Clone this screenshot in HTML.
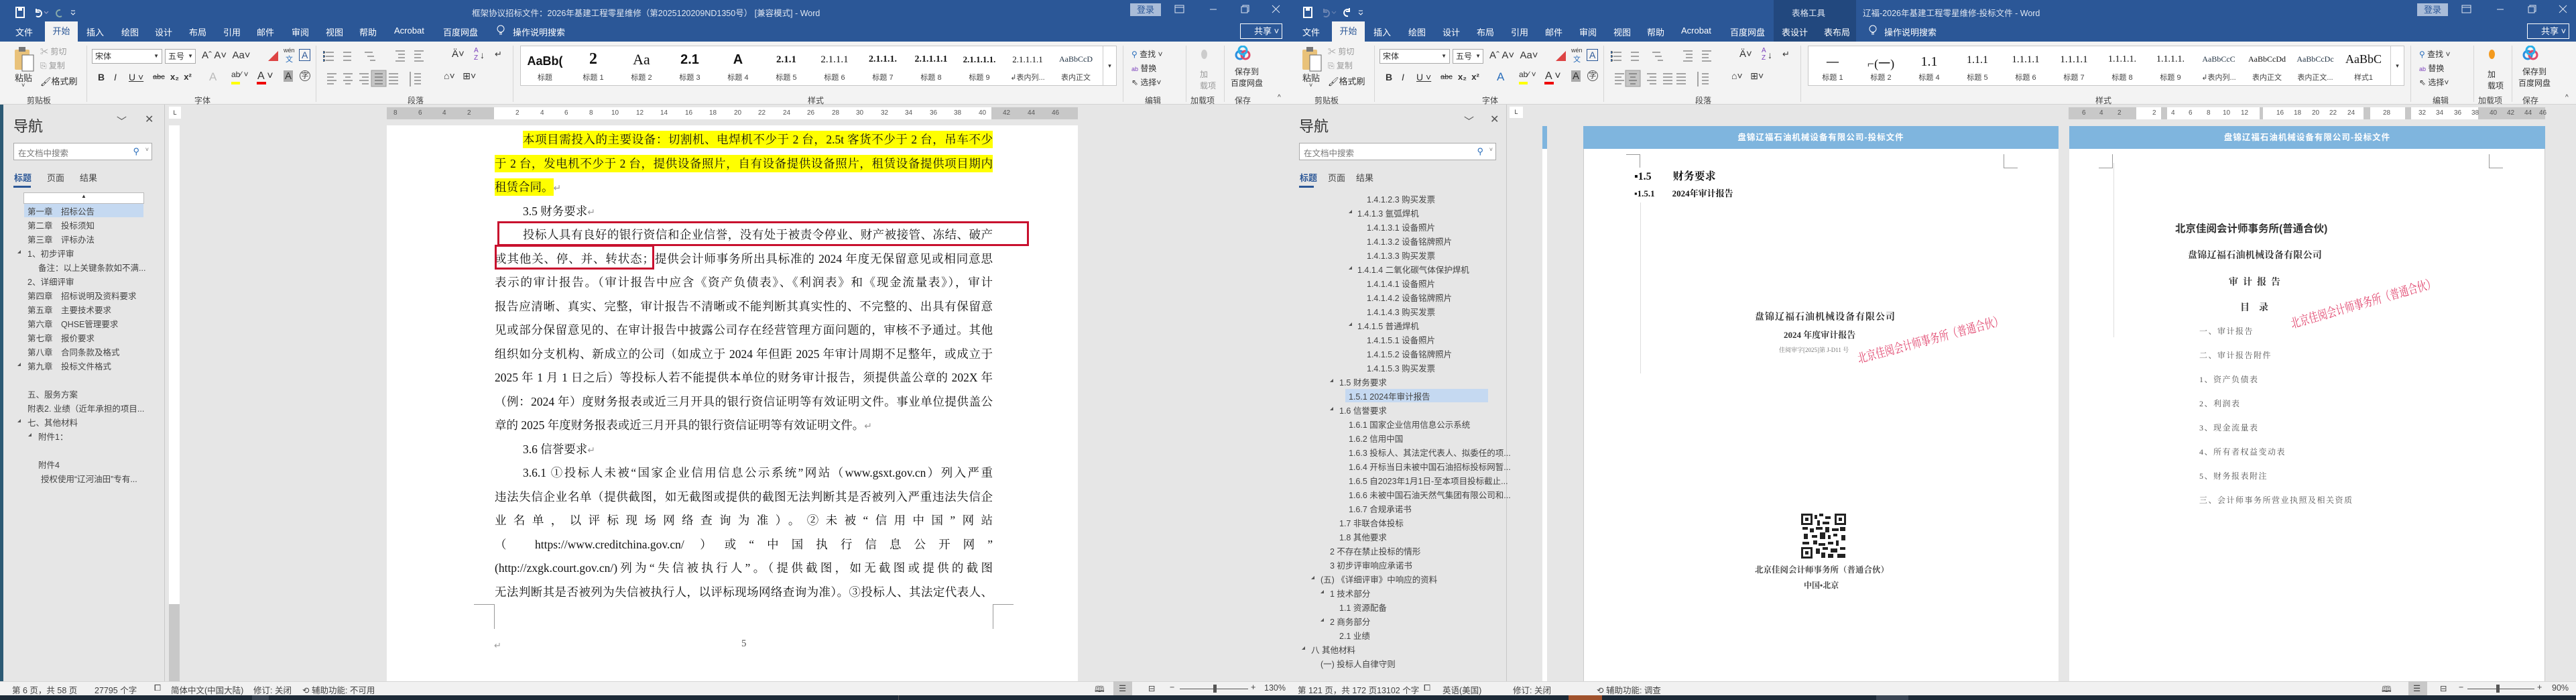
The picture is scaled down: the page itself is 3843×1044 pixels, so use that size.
<!DOCTYPE html>
<html><head><meta charset="utf-8">
<style>
*{margin:0;padding:0;box-sizing:border-box}
body{width:3843px;height:1044px;position:relative;overflow:hidden;background:#e6e6e6;font-family:"Liberation Sans","Noto Sans CJK SC",sans-serif;color:#333}
.a{position:absolute;white-space:nowrap}
.win{position:absolute;top:0;height:1044px;overflow:hidden;background:#e6e6e6}
.tb{position:absolute;left:0;right:0;top:0;height:62px;background:#2b5797}
.tab{position:absolute;top:38px;font-size:13px;color:#fff}
.seltab{position:absolute;top:32px;height:30px;width:49px;background:#f3f3f3;color:#2b5797;font-size:13px;text-align:center;line-height:30px}
.rib{position:absolute;left:0;right:0;top:62px;height:94px;background:#f3f3f3;border-bottom:1px solid #d4d4d4}
.r{position:absolute;font-size:12px;color:#333;white-space:nowrap}
.gl{position:absolute;top:79px;font-size:12px;color:#444}
.sep{position:absolute;top:6px;width:1px;height:84px;background:#d6d6d6}
.box{position:absolute;background:#fff;border:1px solid #aaa;font-size:12px;padding-left:4px;line-height:20px}
.gal{position:absolute;top:6px;height:60px;background:#fff;border:1px solid #c6c6c6}
.si{position:absolute;top:0;width:72px;text-align:center}
.sp{position:absolute;top:12px;left:0;width:72px;text-align:center;font-size:17px;font-weight:bold;color:#111;font-family:"Liberation Serif",serif;overflow:hidden}
.sl{position:absolute;top:38px;left:0;width:72px;text-align:center;font-size:11px;color:#444}
.nav{position:absolute;font-size:12.5px;color:#444;white-space:nowrap}
.tri{position:absolute;width:0;height:0;border-left:5px solid transparent;border-bottom:5px solid #555}
.status{position:absolute;left:0;right:0;top:1016px;height:21px;background:#f1f1f1;border-top:1px solid #d6d6d6;font-size:12.5px;color:#444}
.task{position:absolute;left:0;right:0;top:1037px;height:7px;background:#1d2a37}
.ln{position:absolute;left:738px;width:743px;height:35.5px;line-height:35.5px;font-size:17.5px;font-family:"Liberation Serif","Noto Serif CJK SC",serif;color:#111;text-align:justify;text-align-last:justify;white-space:nowrap}
.ln.l{text-align-last:left}
.ind{left:780px;width:701px}
.hl{background:#ffff00;padding:3px 0}
.rn{position:absolute;top:163px;font-size:10px;color:#555}
.ser{font-family:"Liberation Serif","Noto Serif CJK SC",serif}
.stamp{position:absolute;color:#e0406a;font-family:"Liberation Serif","Noto Serif CJK SC",serif;font-size:14px;white-space:nowrap;transform-origin:0 0}
</style></head><body>

<!-- ================= LEFT WINDOW ================= -->
<div class="win" style="left:0;width:1921px;">
  <div style="position:absolute;left:0;top:0;width:5px;height:1044px;background:#2c5a74"></div>
  <div class="tb"></div>
  <svg class="a" style="left:22px;top:10px" width="110" height="18"><rect x="2" y="1" width="12" height="15" fill="none" stroke="#fff" stroke-width="2"/><rect x="5" y="1" width="6" height="5" fill="#fff"/><path d="M32 6 a5 5 0 1 1 0 8 M32 3 v5 h5" stroke="#fff" fill="none" stroke-width="2"/><path d="M44 7 l3 3 l3-3" stroke="#aac" fill="none"/><path d="M68 5 a5 5 0 1 0 2 9" stroke="#8aa" fill="none" stroke-width="2"/><path d="M84 6 h6 M84 9 l3 3 l3-3" stroke="#fff" fill="none"/></svg>
  <div class="a" style="left:704px;top:9px;font-size:12.5px;color:#dfe6f1">框架协议招标文件：2026年基建工程零星维修（第2025120209ND1350号） [兼容模式] - Word</div>
  <div class="a" style="left:1686px;top:5px;width:46px;height:19px;background:#a9bcd8;color:#2b5797;font-size:13px;text-align:center;line-height:19px">登录</div>
  <svg class="a" style="left:1752px;top:6px" width="160" height="16"><rect x="1" y="2" width="13" height="11" fill="none" stroke="#dfe6f1"/><line x1="1" y1="5" x2="14" y2="5" stroke="#dfe6f1"/><line x1="53" y1="8" x2="63" y2="8" stroke="#dfe6f1"/><rect x="100" y="4" width="9" height="9" fill="none" stroke="#dfe6f1"/><path d="M102 4 v-2 h9 v9 h-2" stroke="#dfe6f1" fill="none"/><path d="M146 2 l11 11 M157 2 l-11 11" stroke="#dfe6f1"/></svg>
  <div class="tab" style="left:23px">文件</div>
  <div class="seltab" style="left:67px">开始</div>
  <div class="tab" style="left:129px">插入</div><div class="tab" style="left:181px">绘图</div><div class="tab" style="left:231px">设计</div><div class="tab" style="left:282px">布局</div><div class="tab" style="left:333px">引用</div><div class="tab" style="left:383px">邮件</div><div class="tab" style="left:435px">审阅</div><div class="tab" style="left:486px">视图</div><div class="tab" style="left:536px">帮助</div><div class="tab" style="left:588px">Acrobat</div><div class="tab" style="left:661px">百度网盘</div>
  <svg class="a" style="left:741px;top:37px" width="12" height="18"><circle cx="6" cy="6" r="5" fill="none" stroke="#fff"/><path d="M4 12 h4 M4 14 h4" stroke="#fff"/></svg>
  <div class="tab" style="left:765px">操作说明搜索</div>
  <div class="a" style="left:1850px;top:35px;width:63px;height:23px;border:1px solid #fff;color:#fff;font-size:13px;line-height:21px;padding-left:20px">共享 ˅</div>
  <div class="rib">
    <svg class="a" style="left:20px;top:6px" width="36" height="40"><rect x="2" y="6" width="22" height="30" rx="2" fill="#e9c27a"/><rect x="8" y="2" width="10" height="7" fill="#777"/><rect x="13" y="14" width="17" height="24" fill="#fff" stroke="#666"/></svg>
    <div class="r" style="left:22px;top:44px;font-size:13px">粘贴</div><div class="r" style="left:32px;top:60px;font-size:9px">˅</div>
    <div class="r" style="left:60px;top:6px;color:#999">✂ 剪切</div>
    <div class="r" style="left:60px;top:27px;color:#999">⎘ 复制</div>
    <div class="r" style="left:60px;top:49px;font-size:13px">🖌格式刷</div>
    <div class="gl" style="left:40px">剪贴板</div>
    <div class="sep" style="left:129px"></div>
    <div class="box" style="left:137px;top:11px;width:105px;height:22px">宋体<span style="position:absolute;right:4px;font-size:8px">▼</span></div>
    <div class="box" style="left:246px;top:11px;width:46px;height:22px">五号<span style="position:absolute;right:3px;font-size:8px">▼</span></div>
    <div class="r" style="left:301px;top:12px;font-size:15px">Aˆ A˅ &nbsp;Aa˅</div>
    <div class="r" style="left:400px;top:11px;color:#d44;font-size:15px">◢</div>
    <div class="r" style="left:423px;top:8px;font-size:9px">wén<br><span style="color:#2a6ebb;font-size:11px">&nbsp;文</span></div>
    <div class="r" style="left:446px;top:11px;border:1px solid #2b5797;padding:0 3px;font-size:14px;color:#2b5797">A</div>
    <div class="r" style="left:146px;top:45px;font-size:14px;font-weight:bold">B</div>
    <div class="r" style="left:170px;top:45px;font-size:14px;font-style:italic">I</div>
    <div class="r" style="left:192px;top:45px;font-size:14px;text-decoration:underline">U ˅</div>
    <div class="r" style="left:228px;top:47px;font-size:11px;text-decoration:line-through">abc</div>
    <div class="r" style="left:254px;top:45px;font-size:13px;font-weight:bold">x₂ &nbsp;x²</div>
    <div class="r" style="left:312px;top:43px;font-size:17px;color:#bbb">A</div>
    <div class="r" style="left:345px;top:42px;font-size:12px">ab⁄ ˅</div>
    <div class="a" style="left:345px;top:60px;width:13px;height:4px;background:#ff0"></div>
    <div class="r" style="left:384px;top:43px;font-size:16px">A ˅</div><div class="a" style="left:383px;top:60px;width:14px;height:4px;background:#e00"></div>
    <div class="r" style="left:423px;top:43px;font-size:15px;background:#aaa;padding:0 2px">A</div>
    <div class="r" style="left:447px;top:43px;font-size:11px;border:1px solid #555;border-radius:50%;width:16px;height:16px;text-align:center;line-height:14px">字</div>
    <div class="gl" style="left:290px">字体</div>
    <div class="sep" style="left:471px"></div>
    <svg class="a" style="left:482px;top:10px" width="280" height="62" stroke="#555" fill="none">
      <path d="M4 6h12M4 12h12M4 18h12M30 6h12M30 12h12M30 18h12M62 6h12M66 12h10M70 18h8M108 4h14M112 9h10M112 14h10M108 19h14M136 4h14M136 9h10M136 14h10M136 19h14"/>
      <circle cx="1" cy="6" r="1.5" fill="#2a6ebb"/><circle cx="1" cy="12" r="1.5" fill="#2a6ebb"/><circle cx="1" cy="18" r="1.5" fill="#2a6ebb"/>
      <path d="M6 38h14M6 43h10M6 48h14M6 53h10M30 38h14M33 43h8M30 48h14M33 53h8M54 38h14M58 43h10M54 48h14M58 53h10"/>
      <rect x="72" y="33" width="22" height="24" fill="#c5c5c5" stroke="#999"/><path d="M77 38h12M77 43h12M77 48h12M77 53h12"/>
      <path d="M98 38h14M98 43h14M98 48h14M98 53h14M130 35v22M136 38h10M136 43h10M136 48h10M136 53h10"/>
    </svg>
    <div class="r" style="left:674px;top:10px;font-size:15px">Ä˅</div>
    <div class="r" style="left:707px;top:8px;font-size:10px;color:#7a3ebb">A<br>Z</div><div class="r" style="left:716px;top:12px;font-size:14px">↓</div>
    <div class="r" style="left:738px;top:11px;font-size:13px">↵</div>
    <div class="r" style="left:662px;top:43px;font-size:14px">⌂˅ &nbsp;&nbsp;⊞˅</div>
    <div class="gl" style="left:608px">段落</div>
    <div class="sep" style="left:765px"></div>
    <div class="gal" style="left:776px;width:890px">
      <div class="si" style="left:0"><div class="sp" style="font-family:'Liberation Sans';font-size:18px">AaBb(</div><div class="sl">标题</div></div>
      <div class="si" style="left:72px"><div class="sp" style="font-size:24px;top:6px">2</div><div class="sl">标题 1</div></div>
      <div class="si" style="left:144px"><div class="sp" style="font-size:22px;top:7px;font-weight:normal">Aa</div><div class="sl">标题 2</div></div>
      <div class="si" style="left:216px"><div class="sp" style="font-family:'Liberation Sans';font-size:20px;top:9px">2.1</div><div class="sl">标题 3</div></div>
      <div class="si" style="left:288px"><div class="sp" style="font-family:'Liberation Sans';font-size:20px;top:9px">A</div><div class="sl">标题 4</div></div>
      <div class="si" style="left:360px"><div class="sp" style="font-size:15px">2.1.1</div><div class="sl">标题 5</div></div>
      <div class="si" style="left:432px"><div class="sp" style="font-size:15px;font-weight:normal">2.1.1.1</div><div class="sl">标题 6</div></div>
      <div class="si" style="left:504px"><div class="sp" style="font-size:14px">2.1.1.1.</div><div class="sl">标题 7</div></div>
      <div class="si" style="left:576px"><div class="sp" style="font-size:14px">2.1.1.1.1</div><div class="sl">标题 8</div></div>
      <div class="si" style="left:648px"><div class="sp" style="font-size:13px">2.1.1.1.1.</div><div class="sl">标题 9</div></div>
      <div class="si" style="left:720px"><div class="sp" style="font-size:13px;font-weight:normal">2.1.1.1.1</div><div class="sl">↲表内列...</div></div>
      <div class="si" style="left:792px"><div class="sp" style="font-size:12px;font-weight:normal;color:#234">AaBbCcD</div><div class="sl">表内正文</div></div>
      <div style="position:absolute;right:0;top:0;width:20px;height:58px;border-left:1px solid #ccc;font-size:9px;text-align:center;line-height:58px">▾</div>
    </div>
    <div class="gl" style="left:1205px">样式</div>
    <div class="sep" style="left:1675px"></div>
    <div class="r" style="left:1688px;top:10px"><span style="color:#2a6ebb">⚲</span> 查找 ˅</div>
    <div class="r" style="left:1688px;top:31px"><span style="color:#7a3ebb;font-size:9px">ab</span> 替换</div>
    <div class="r" style="left:1688px;top:52px">⇖ 选择˅</div>
    <div class="gl" style="left:1708px">编辑</div>
    <div class="sep" style="left:1769px"></div>
    <div class="a" style="left:1792px;top:12px;width:9px;height:14px;border-radius:50%;background:#ccc"></div>
    <div class="r" style="left:1790px;top:40px;color:#999">加<br>载项</div>
    <div class="gl" style="left:1776px">加载项</div>
    <div class="sep" style="left:1826px"></div>
    <svg class="a" style="left:1842px;top:6px" width="24" height="24"><circle cx="8" cy="14" r="6" fill="none" stroke="#2a8ee0" stroke-width="3"/><circle cx="16" cy="14" r="6" fill="none" stroke="#e04a6a" stroke-width="3"/><circle cx="12" cy="7" r="6" fill="none" stroke="#29b0e8" stroke-width="3"/></svg>
    <div class="r" style="left:1836px;top:36px;text-align:center">保存到<br>百度网盘</div>
    <div class="gl" style="left:1842px">保存</div>
    <div class="r" style="left:1906px;top:78px;font-size:10px">^</div>
  </div>
  <div class="a" style="left:252px;top:159px;width:18px;height:18px;background:#fff;font-size:9px;text-align:center;line-height:18px">L</div>
  <div class="a" style="left:577px;top:160px;width:1031px;height:18px;background:#c8c8c8"></div>
  <div class="a" style="left:737px;top:160px;width:742px;height:18px;background:#fff"></div>
  <div class="rn" style="left:587px">8</div><div class="rn" style="left:624px">6</div><div class="rn" style="left:660px">4</div><div class="rn" style="left:697px">2</div>
  <div class="rn" style="left:769px">2</div><div class="rn" style="left:806px">4</div><div class="rn" style="left:842px">6</div><div class="rn" style="left:879px">8</div><div class="rn" style="left:912px">10</div><div class="rn" style="left:949px">12</div><div class="rn" style="left:985px">14</div><div class="rn" style="left:1022px">16</div><div class="rn" style="left:1058px">18</div><div class="rn" style="left:1095px">20</div><div class="rn" style="left:1131px">22</div><div class="rn" style="left:1168px">24</div><div class="rn" style="left:1204px">26</div><div class="rn" style="left:1241px">28</div><div class="rn" style="left:1277px">30</div><div class="rn" style="left:1314px">32</div><div class="rn" style="left:1350px">34</div><div class="rn" style="left:1387px">36</div><div class="rn" style="left:1423px">38</div><div class="rn" style="left:1460px">40</div><div class="rn" style="left:1496px">42</div><div class="rn" style="left:1533px">44</div><div class="rn" style="left:1569px">46</div>
  <div class="a" style="left:252px;top:187px;width:16px;height:714px;background:#fff"></div>
  <div class="a" style="left:252px;top:901px;width:16px;height:115px;background:#c8c8c8"></div>
  <div class="a" style="left:245px;top:156px;width:1px;height:860px;background:#c8c8c8"></div>
  <div class="a" style="left:20px;top:171px;font-size:22px;color:#333">导航</div>
  <div class="a" style="left:174px;top:170px;font-size:15px;color:#555">﹀</div>
  <div class="a" style="left:216px;top:168px;font-size:16px;color:#555">✕</div>
  <div class="a" style="left:20px;top:213px;width:207px;height:26px;background:#fff;border:1px solid #aaa;font-size:12.5px;color:#777;padding:4px 6px">在文档中搜索<span style="position:absolute;right:18px;color:#2a6ebb;font-size:13px">⚲</span><span style="position:absolute;right:4px;font-size:9px">˅</span></div>
  <div class="a" style="left:21px;top:255px;font-size:13px;color:#2b5797;font-weight:bold">标题</div>
  <div class="a" style="left:20px;top:277px;width:26px;height:3px;background:#2b5797"></div>
  <div class="a" style="left:70px;top:255px;font-size:13px;color:#444">页面</div>
  <div class="a" style="left:119px;top:255px;font-size:13px;color:#444">结果</div>
  <div class="a" style="left:35px;top:287px;width:180px;height:17px;background:#fff;border:1px solid #bbb;font-size:8px;text-align:center">▲</div>
  <div class="a" style="left:36px;top:304px;width:178px;height:20px;background:#c5d9f1"></div>
  <div class="nav" style="left:41px;top:305px">第一章　招标公告</div>
  <div class="nav" style="left:41px;top:326px">第二章　投标须知</div>
  <div class="nav" style="left:41px;top:347px">第三章　评标办法</div>
  <div class="tri" style="left:26px;top:373px"></div><div class="nav" style="left:41px;top:368px">1、初步评审</div>
  <div class="nav" style="left:57px;top:389px">备注：以上关键条款如不满...</div>
  <div class="nav" style="left:41px;top:410px">2、详细评审</div>
  <div class="nav" style="left:41px;top:431px">第四章　招标说明及资料要求</div>
  <div class="nav" style="left:41px;top:452px">第五章　主要技术要求</div>
  <div class="nav" style="left:41px;top:473px">第六章　QHSE管理要求</div>
  <div class="nav" style="left:41px;top:494px">第七章　报价要求</div>
  <div class="nav" style="left:41px;top:515px">第八章　合同条款及格式</div>
  <div class="tri" style="left:26px;top:541px"></div><div class="nav" style="left:41px;top:536px">第九章　投标文件格式</div>
  <div class="nav" style="left:41px;top:578px">五、服务方案</div>
  <div class="nav" style="left:41px;top:599px">附表2. 业绩（近年承担的项目...</div>
  <div class="tri" style="left:26px;top:625px"></div><div class="nav" style="left:41px;top:620px">七、其他材料</div>
  <div class="tri" style="left:42px;top:646px"></div><div class="nav" style="left:57px;top:641px">附件1：</div>
  <div class="nav" style="left:57px;top:683px">附件4</div>
  <div class="nav" style="left:61px;top:704px">授权使用“辽河油田”专有...</div>
  <div class="a" style="left:577px;top:187px;width:1031px;height:829px;background:#fff"></div>
  <div class="ln ind" style="top:191px"><span class="hl">本项目需投入的主要设备：切割机、电焊机不少于 2 台，2.5t 客货不少于 2 台，吊车不少</span></div>
  <div class="ln" style="top:227px"><span class="hl">于 2 台，发电机不少于 2 台，提供设备照片，自有设备提供设备照片，租赁设备提供项目期内</span></div>
  <div class="ln l" style="top:262px"><span class="hl">租赁合同。</span><span style="color:#999;font-size:14px">↵</span></div>
  <div class="ln ind l" style="top:298px">3.5 财务要求<span style="color:#999;font-size:14px">↵</span></div>
  <div class="ln ind" style="top:333px">投标人具有良好的银行资信和企业信誉，没有处于被责令停业、财产被接管、冻结、破产</div>
  <div class="ln" style="top:369px">或其他关、停、并、转状态；提供会计师事务所出具标准的 2024 年度无保留意见或相同意思</div>
  <div class="ln" style="top:404px">表示的审计报告。（审计报告中应含《资产负债表》、《利润表》和《现金流量表》），审计</div>
  <div class="ln" style="top:440px">报告应清晰、真实、完整，审计报告不清晰或不能判断其真实性的、不完整的、出具有保留意</div>
  <div class="ln" style="top:475px">见或部分保留意见的、在审计报告中披露公司存在经营管理方面问题的，审核不予通过。其他</div>
  <div class="ln" style="top:511px">组织如分支机构、新成立的公司（如成立于 2024 年但距 2025 年审计周期不足整年，或成立于</div>
  <div class="ln" style="top:546px">2025 年 1 月 1 日之后）等投标人若不能提供本单位的财务审计报告，须提供盖公章的 202X 年</div>
  <div class="ln" style="top:582px">（例：2024 年）度财务报表或近三月开具的银行资信证明等有效证明文件。事业单位提供盖公</div>
  <div class="ln l" style="top:617px">章的 2025 年度财务报表或近三月开具的银行资信证明等有效证明文件。<span style="color:#999;font-size:14px">↵</span></div>
  <div class="ln ind l" style="top:653px">3.6 信誉要求<span style="color:#999;font-size:14px">↵</span></div>
  <div class="ln ind" style="top:688px">3.6.1 ①投标人未被“国家企业信用信息公示系统”网站（www.gsxt.gov.cn）列入严重</div>
  <div class="ln" style="top:724px">违法失信企业名单（提供截图，如无截图或提供的截图无法判断其是否被列入严重违法失信企</div>
  <div class="ln" style="top:759px">业名单，以评标现场网络查询为准）。②未被“信用中国”网站</div>
  <div class="ln" style="top:795px">（ https://www.creditchina.gov.cn/ ）或“中国执行信息公开网”</div>
  <div class="ln" style="top:830px">(http://zxgk.court.gov.cn/)列为“失信被执行人”。（提供截图，如无截图或提供的截图</div>
  <div class="ln" style="top:866px">无法判断其是否被列为失信被执行人，以评标现场网络查询为准）。③投标人、其法定代表人、</div>
  <div class="a" style="left:742px;top:330px;width:793px;height:37px;border:3px solid #c8102e"></div>
  <div class="a" style="left:738px;top:365px;width:238px;height:37px;border:3px solid #c8102e"></div>
  <div class="a" style="left:707px;top:901px;width:30px;height:1px;background:#999"></div><div class="a" style="left:737px;top:901px;width:1px;height:37px;background:#999"></div>
  <div class="a" style="left:1481px;top:901px;width:31px;height:1px;background:#999"></div><div class="a" style="left:1481px;top:901px;width:1px;height:37px;background:#999"></div>
  <div class="a ser" style="left:1106px;top:952px;font-size:15px;color:#555">5</div>
  <div class="a" style="left:737px;top:955px;font-size:13px;color:#999">↵</div>
  <div class="status">
    <div class="a" style="left:18px;top:2px">第 6 页，共 58 页</div>
    <div class="a" style="left:141px;top:2px">27795 个字</div>
    <div class="a" style="left:230px;top:2px">⧠</div>
    <div class="a" style="left:255px;top:2px">简体中文(中国大陆)</div>
    <div class="a" style="left:378px;top:2px">修订: 关闭</div>
    <div class="a" style="left:451px;top:2px">⟲ 辅助功能: 不可用</div>
    <div class="a" style="left:1633px;top:2px">🕮</div>
    <div class="a" style="left:1661px;top:-1px;width:28px;height:21px;background:#c8c8c8"></div>
    <div class="a" style="left:1669px;top:2px">☰</div>
    <div class="a" style="left:1713px;top:2px">⊟</div>
    <div class="a" style="left:1745px;top:1px">−</div>
    <div class="a" style="left:1760px;top:10px;width:102px;height:1px;background:#555"></div>
    <div class="a" style="left:1810px;top:4px;width:5px;height:12px;background:#555"></div>
    <div class="a" style="left:1866px;top:1px">+</div>
    <div class="a" style="left:1886px;top:2px">130%</div>
  </div>
  <div class="task"><div class="a" style="left:376px;top:0;width:25px;height:7px;background:#3a4654"></div><div class="a" style="left:1340px;top:0;width:1px;height:7px;background:#555"></div></div>
</div>

<!-- ================= RIGHT WINDOW ================= -->
<div class="win" style="left:1921px;width:1922px;">
  <div class="tb"></div>
  <div class="a" style="left:725px;top:0;width:123px;height:62px;background:#22487e"></div>
  <div class="a" style="left:752px;top:9px;font-size:12.5px;color:#dfe6f1">表格工具</div>
  <svg class="a" style="left:22px;top:10px" width="110" height="18"><rect x="2" y="1" width="12" height="15" fill="none" stroke="#fff" stroke-width="2"/><rect x="5" y="1" width="6" height="5" fill="#fff"/><path d="M32 6 a5 5 0 1 1 0 8 M32 3 v5 h5" stroke="#6d86b3" fill="none" stroke-width="2"/><path d="M44 7 l3 3 l3-3" stroke="#6d86b3" fill="none"/><path d="M70 5 a5 5 0 1 0 -2 9 M70 2 v5 h-5" stroke="#fff" fill="none" stroke-width="2"/><path d="M84 6 h6 M84 9 l3 3 l3-3" stroke="#fff" fill="none"/></svg>
  <div class="a" style="left:858px;top:9px;font-size:12.5px;color:#dfe6f1">辽福-2026年基建工程零星维修-投标文件 - Word</div>
  <div class="a" style="left:1685px;top:5px;width:46px;height:19px;background:#a9bcd8;color:#2b5797;font-size:13px;text-align:center;line-height:19px">登录</div>
  <svg class="a" style="left:1751px;top:6px" width="160" height="16"><rect x="1" y="2" width="13" height="11" fill="none" stroke="#dfe6f1"/><line x1="1" y1="5" x2="14" y2="5" stroke="#dfe6f1"/><line x1="53" y1="8" x2="63" y2="8" stroke="#dfe6f1"/><rect x="100" y="4" width="9" height="9" fill="none" stroke="#dfe6f1"/><path d="M102 4 v-2 h9 v9 h-2" stroke="#dfe6f1" fill="none"/><path d="M146 2 l11 11 M157 2 l-11 11" stroke="#dfe6f1"/></svg>
  <div class="tab" style="left:22px">文件</div>
  <div class="seltab" style="left:66px">开始</div>
  <div class="tab" style="left:128px">插入</div><div class="tab" style="left:180px">绘图</div><div class="tab" style="left:231px">设计</div><div class="tab" style="left:282px">布局</div><div class="tab" style="left:333px">引用</div><div class="tab" style="left:384px">邮件</div><div class="tab" style="left:435px">审阅</div><div class="tab" style="left:486px">视图</div><div class="tab" style="left:536px">帮助</div><div class="tab" style="left:587px">Acrobat</div><div class="tab" style="left:660px">百度网盘</div>
  <div class="tab" style="left:737px">表设计</div><div class="tab" style="left:800px">表布局</div>
  <svg class="a" style="left:867px;top:37px" width="12" height="18"><circle cx="6" cy="6" r="5" fill="none" stroke="#fff"/><path d="M4 12 h4 M4 14 h4" stroke="#fff"/></svg>
  <div class="tab" style="left:890px">操作说明搜索</div>
  <div class="a" style="left:1849px;top:35px;width:63px;height:23px;border:1px solid #fff;color:#fff;font-size:13px;line-height:21px;padding-left:20px">共享 ˅</div>
  <div class="rib">
    <svg class="a" style="left:20px;top:6px" width="36" height="40"><rect x="2" y="6" width="22" height="30" rx="2" fill="#e9c27a"/><rect x="8" y="2" width="10" height="7" fill="#777"/><rect x="13" y="14" width="17" height="24" fill="#fff" stroke="#666"/></svg>
    <div class="r" style="left:22px;top:44px;font-size:13px">粘贴</div><div class="r" style="left:32px;top:60px;font-size:9px">˅</div>
    <div class="r" style="left:60px;top:6px;color:#999">✂ 剪切</div>
    <div class="r" style="left:60px;top:27px;color:#999">⎘ 复制</div>
    <div class="r" style="left:60px;top:49px;font-size:13px">🖌格式刷</div>
    <div class="gl" style="left:40px">剪贴板</div>
    <div class="sep" style="left:129px"></div>
    <div class="box" style="left:137px;top:11px;width:105px;height:22px">宋体<span style="position:absolute;right:4px;font-size:8px">▼</span></div>
    <div class="box" style="left:246px;top:11px;width:46px;height:22px">五号<span style="position:absolute;right:3px;font-size:8px">▼</span></div>
    <div class="r" style="left:301px;top:12px;font-size:15px">Aˆ A˅ &nbsp;Aa˅</div>
    <div class="r" style="left:400px;top:11px;color:#d44;font-size:15px">◢</div>
    <div class="r" style="left:423px;top:8px;font-size:9px">wén<br><span style="color:#2a6ebb;font-size:11px">&nbsp;文</span></div>
    <div class="r" style="left:446px;top:11px;border:1px solid #2b5797;padding:0 3px;font-size:14px;color:#2b5797">A</div>
    <div class="r" style="left:146px;top:45px;font-size:14px;font-weight:bold">B</div>
    <div class="r" style="left:170px;top:45px;font-size:14px;font-style:italic">I</div>
    <div class="r" style="left:192px;top:45px;font-size:14px;text-decoration:underline">U ˅</div>
    <div class="r" style="left:228px;top:47px;font-size:11px;text-decoration:line-through">abc</div>
    <div class="r" style="left:254px;top:45px;font-size:13px;font-weight:bold">x₂ &nbsp;x²</div>
    <div class="r" style="left:312px;top:43px;font-size:17px;color:#2a6ebb">A</div>
    <div class="r" style="left:345px;top:42px;font-size:12px">ab⁄ ˅</div>
    <div class="a" style="left:345px;top:60px;width:13px;height:4px;background:#ff0"></div>
    <div class="r" style="left:384px;top:43px;font-size:16px">A ˅</div><div class="a" style="left:383px;top:60px;width:14px;height:4px;background:#e00"></div>
    <div class="r" style="left:423px;top:43px;font-size:15px;background:#aaa;padding:0 2px">A</div>
    <div class="r" style="left:447px;top:43px;font-size:11px;border:1px solid #555;border-radius:50%;width:16px;height:16px;text-align:center;line-height:14px">字</div>
    <div class="gl" style="left:290px">字体</div>
    <div class="sep" style="left:471px"></div>
    <svg class="a" style="left:482px;top:10px" width="280" height="62" stroke="#555" fill="none">
      <path d="M4 6h12M4 12h12M4 18h12M30 6h12M30 12h12M30 18h12M62 6h12M66 12h10M70 18h8M108 4h14M112 9h10M112 14h10M108 19h14M136 4h14M136 9h10M136 14h10M136 19h14"/>
      <circle cx="1" cy="6" r="1.5" fill="#2a6ebb"/><circle cx="1" cy="12" r="1.5" fill="#2a6ebb"/><circle cx="1" cy="18" r="1.5" fill="#2a6ebb"/>
      <path d="M6 38h14M6 43h10M6 48h14M6 53h10"/>
      <rect x="22" y="33" width="22" height="24" fill="#c5c5c5" stroke="#999"/><path d="M27 38h12M29 43h8M27 48h12M29 53h8"/>
      <path d="M54 38h14M58 43h10M54 48h14M58 53h10M78 38h14M78 43h14M78 48h14M78 53h14M98 38h14M98 43h14M98 48h14M98 53h14M130 35v22M136 38h10M136 43h10M136 48h10M136 53h10"/>
    </svg>
    <div class="r" style="left:674px;top:10px;font-size:15px">Ä˅</div>
    <div class="r" style="left:707px;top:8px;font-size:10px;color:#7a3ebb">A<br>Z</div><div class="r" style="left:716px;top:12px;font-size:14px">↓</div>
    <div class="r" style="left:738px;top:11px;font-size:13px">↵</div>
    <div class="r" style="left:662px;top:43px;font-size:14px">⌂˅ &nbsp;&nbsp;⊞˅</div>
    <div class="gl" style="left:608px">段落</div>
    <div class="sep" style="left:765px"></div>
    <div class="gal" style="left:776px;width:890px">
      <div class="si" style="left:0"><div class="sp" style="font-size:18px">—</div><div class="sl">标题 1</div></div>
      <div class="si" style="left:72px"><div class="sp" style="font-size:18px;font-weight:normal">⌐(一)</div><div class="sl">标题 2</div></div>
      <div class="si" style="left:144px"><div class="sp" style="font-size:20px;font-weight:normal">1.1</div><div class="sl">标题 4</div></div>
      <div class="si" style="left:216px"><div class="sp" style="font-size:16px;font-weight:normal">1.1.1</div><div class="sl">标题 5</div></div>
      <div class="si" style="left:288px"><div class="sp" style="font-size:15px;font-weight:normal">1.1.1.1</div><div class="sl">标题 6</div></div>
      <div class="si" style="left:360px"><div class="sp" style="font-size:15px;font-weight:normal">1.1.1.1</div><div class="sl">标题 7</div></div>
      <div class="si" style="left:432px"><div class="sp" style="font-size:14px;font-weight:normal">1.1.1.1.</div><div class="sl">标题 8</div></div>
      <div class="si" style="left:504px"><div class="sp" style="font-size:14px;font-weight:normal">1.1.1.1.</div><div class="sl">标题 9</div></div>
      <div class="si" style="left:576px"><div class="sp" style="font-size:12px;font-weight:normal;color:#234">AaBbCcC</div><div class="sl">↲表内列...</div></div>
      <div class="si" style="left:648px"><div class="sp" style="font-size:12px;font-weight:normal">AaBbCcDd</div><div class="sl">表内正文</div></div>
      <div class="si" style="left:720px"><div class="sp" style="font-size:12px;font-weight:normal;color:#234">AaBbCcDc</div><div class="sl">表内正文...</div></div>
      <div class="si" style="left:792px"><div class="sp" style="font-size:18px;font-weight:normal;top:9px">AaBbC</div><div class="sl">样式1</div></div>
      <div style="position:absolute;right:0;top:0;width:20px;height:58px;border-left:1px solid #ccc;font-size:9px;text-align:center;line-height:58px">▾</div>
    </div>
    <div class="gl" style="left:1205px">样式</div>
    <div class="sep" style="left:1675px"></div>
    <div class="r" style="left:1688px;top:10px"><span style="color:#2a6ebb">⚲</span> 查找 ˅</div>
    <div class="r" style="left:1688px;top:31px"><span style="color:#7a3ebb;font-size:9px">ab</span> 替换</div>
    <div class="r" style="left:1688px;top:52px">⇖ 选择˅</div>
    <div class="gl" style="left:1708px">编辑</div>
    <div class="sep" style="left:1769px"></div>
    <div class="a" style="left:1792px;top:12px;width:9px;height:14px;border-radius:50%;background:#f39a1e"></div>
    <div class="r" style="left:1790px;top:40px">加<br>载项</div>
    <div class="gl" style="left:1776px">加载项</div>
    <div class="sep" style="left:1826px"></div>
    <svg class="a" style="left:1842px;top:6px" width="24" height="24"><circle cx="8" cy="14" r="6" fill="none" stroke="#2a8ee0" stroke-width="3"/><circle cx="16" cy="14" r="6" fill="none" stroke="#e04a6a" stroke-width="3"/><circle cx="12" cy="7" r="6" fill="none" stroke="#29b0e8" stroke-width="3"/></svg>
    <div class="r" style="left:1836px;top:36px;text-align:center">保存到<br>百度网盘</div>
    <div class="gl" style="left:1842px">保存</div>
    <div class="r" style="left:1906px;top:78px;font-size:10px">^</div>
  </div>
  <div class="a" style="left:326px;top:156px;width:1px;height:860px;background:#c8c8c8"></div>
  <div class="a" style="left:331px;top:159px;width:20px;height:17px;background:#fff;font-size:9px;text-align:center;line-height:17px">L</div>
  <div class="a" style="left:17px;top:171px;font-size:22px;color:#333">导航</div>
  <div class="a" style="left:263px;top:170px;font-size:15px;color:#555">﹀</div>
  <div class="a" style="left:302px;top:168px;font-size:16px;color:#555">✕</div>
  <div class="a" style="left:17px;top:213px;width:294px;height:26px;background:#fff;border:1px solid #aaa;font-size:12.5px;color:#777;padding:4px 6px">在文档中搜索<span style="position:absolute;right:18px;color:#2a6ebb;font-size:13px">⚲</span><span style="position:absolute;right:4px;font-size:9px">˅</span></div>
  <div class="a" style="left:18px;top:255px;font-size:13px;color:#2b5797;font-weight:bold">标题</div>
  <div class="a" style="left:17px;top:277px;width:22px;height:3px;background:#2b5797"></div>
  <div class="a" style="left:60px;top:255px;font-size:13px;color:#444">页面</div>
  <div class="a" style="left:102px;top:255px;font-size:13px;color:#444">结果</div>
  <div class="nav" style="left:118px;top:287px">1.4.1.2.3 购买发票</div>
  <div class="tri" style="left:91px;top:313px"></div><div class="nav" style="left:104px;top:308px">1.4.1.3 氩弧焊机</div>
  <div class="nav" style="left:118px;top:329px">1.4.1.3.1 设备照片</div>
  <div class="nav" style="left:118px;top:350px">1.4.1.3.2 设备铭牌照片</div>
  <div class="nav" style="left:118px;top:371px">1.4.1.3.3 购买发票</div>
  <div class="tri" style="left:91px;top:397px"></div><div class="nav" style="left:104px;top:392px">1.4.1.4 二氧化碳气体保护焊机</div>
  <div class="nav" style="left:118px;top:413px">1.4.1.4.1 设备照片</div>
  <div class="nav" style="left:118px;top:434px">1.4.1.4.2 设备铭牌照片</div>
  <div class="nav" style="left:118px;top:455px">1.4.1.4.3 购买发票</div>
  <div class="tri" style="left:91px;top:481px"></div><div class="nav" style="left:104px;top:476px">1.4.1.5 普通焊机</div>
  <div class="nav" style="left:118px;top:497px">1.4.1.5.1 设备照片</div>
  <div class="nav" style="left:118px;top:518px">1.4.1.5.2 设备铭牌照片</div>
  <div class="nav" style="left:118px;top:539px">1.4.1.5.3 购买发票</div>
  <div class="tri" style="left:63px;top:565px"></div><div class="nav" style="left:77px;top:560px">1.5 财务要求</div>
  <div class="a" style="left:86px;top:580px;width:213px;height:20px;background:#c5d9f1"></div>
  <div class="nav" style="left:91px;top:581px">1.5.1 2024年审计报告</div>
  <div class="tri" style="left:63px;top:607px"></div><div class="nav" style="left:77px;top:602px">1.6 信誉要求</div>
  <div class="nav" style="left:91px;top:623px">1.6.1 国家企业信用信息公示系统</div>
  <div class="nav" style="left:91px;top:644px">1.6.2 信用中国</div>
  <div class="nav" style="left:91px;top:665px">1.6.3 投标人、其法定代表人、拟委任的项...</div>
  <div class="nav" style="left:91px;top:686px">1.6.4 开标当日未被中国石油招标投标网暂...</div>
  <div class="nav" style="left:91px;top:707px">1.6.5 自2023年1月1日-至本项目投标截止...</div>
  <div class="nav" style="left:91px;top:728px">1.6.6 未被中国石油天然气集团有限公司和...</div>
  <div class="nav" style="left:91px;top:749px">1.6.7 合规承诺书</div>
  <div class="nav" style="left:77px;top:770px">1.7 非联合体投标</div>
  <div class="nav" style="left:77px;top:791px">1.8 其他要求</div>
  <div class="nav" style="left:63px;top:812px">2 不存在禁止投标的情形</div>
  <div class="nav" style="left:63px;top:833px">3 初步评审响应承诺书</div>
  <div class="tri" style="left:35px;top:859px"></div><div class="nav" style="left:49px;top:854px">(五) 《详细评审》中响应的资料</div>
  <div class="tri" style="left:49px;top:880px"></div><div class="nav" style="left:63px;top:875px">1 技术部分</div>
  <div class="nav" style="left:77px;top:896px">1.1 资源配备</div>
  <div class="tri" style="left:49px;top:922px"></div><div class="nav" style="left:63px;top:917px">2 商务部分</div>
  <div class="nav" style="left:77px;top:938px">2.1 业绩</div>
  <div class="tri" style="left:21px;top:964px"></div><div class="nav" style="left:35px;top:959px">八 其他材料</div>
  <div class="nav" style="left:49px;top:980px">(一) 投标人自律守则</div>
  <div class="a" style="left:380px;top:188px;width:7px;height:828px;background:#fff"></div>
  <div class="a" style="left:380px;top:188px;width:7px;height:34px;background:#7fb5de"></div>
  <div class="a" style="left:1165px;top:160px;width:711px;height:18px;background:#c8c8c8"></div>
  <div class="a" style="left:1266px;top:160px;width:37px;height:18px;background:#fff"></div>
  <div class="a" style="left:1312px;top:160px;width:138px;height:18px;background:#fff"></div>
  <div class="a" style="left:1455px;top:160px;width:150px;height:18px;background:#fff"></div>
  <div class="a" style="left:1615px;top:160px;width:52px;height:18px;background:#fff"></div>
  <div class="a" style="left:1676px;top:160px;width:100px;height:18px;background:#fff"></div>
  <div class="rn" style="left:1185px">6</div><div class="rn" style="left:1211px">4</div><div class="rn" style="left:1238px">2</div><div class="rn" style="left:1290px">2</div><div class="rn" style="left:1318px">4</div><div class="rn" style="left:1344px">6</div><div class="rn" style="left:1371px">8</div><div class="rn" style="left:1395px">10</div><div class="rn" style="left:1422px">12</div><div class="rn" style="left:1475px">16</div><div class="rn" style="left:1501px">18</div><div class="rn" style="left:1528px">20</div><div class="rn" style="left:1554px">22</div><div class="rn" style="left:1581px">24</div><div class="rn" style="left:1634px">28</div><div class="rn" style="left:1687px">32</div><div class="rn" style="left:1713px">34</div><div class="rn" style="left:1740px">36</div><div class="rn" style="left:1766px">38</div><div class="rn" style="left:1793px">40</div><div class="rn" style="left:1819px">42</div><div class="rn" style="left:1845px">44</div><div class="rn" style="left:1867px">46</div>
  <div class="a" style="left:441px;top:188px;width:709px;height:828px;background:#fff;border-left:1px solid #ccc"></div>
  <div class="a" style="left:441px;top:188px;width:709px;height:34px;background:#7fb5de;color:#fff;font-weight:bold;font-size:12.5px;text-align:center;line-height:34px;letter-spacing:1px">盘锦辽福石油机械设备有限公司-投标文件</div>
  <div class="a" style="left:505px;top:230px;width:20px;height:1px;background:#999"></div><div class="a" style="left:525px;top:230px;width:1px;height:20px;background:#999"></div>
  <div class="a" style="left:1068px;top:230px;width:1px;height:20px;background:#999"></div><div class="a" style="left:1068px;top:250px;width:21px;height:1px;background:#999"></div>
  <div class="a ser" style="left:517px;top:250px;font-size:16px;font-weight:bold;color:#111">▪1.5　　财务要求</div>
  <div class="a ser" style="left:517px;top:278px;font-size:13px;font-weight:bold;color:#111">▪1.5.1　　2024年审计报告</div>
  <div class="a" style="left:526px;top:302px;width:1px;height:255px;background:#ddd"></div>
  <div class="a ser" style="left:697px;top:462px;font-size:14px;font-weight:bold;color:#333;letter-spacing:1px">盘锦辽福石油机械设备有限公司</div>
  <div class="a ser" style="left:740px;top:489px;font-size:13px;font-weight:bold;color:#333">2024 年度审计报告</div>
  <div class="a ser" style="left:733px;top:515px;font-size:9px;color:#777">佳阅审字[2025]第 J-D11 号</div>
  <div class="stamp" style="left:847px;top:522px;transform:rotate(-15deg) scaleY(1.35)">北京佳阅会计师事务所（普通合伙）</div>
  <svg class="a" style="left:766px;top:766px" width="67" height="67" shape-rendering="crispEdges">
    <rect width="67" height="67" fill="#fff"/>
    <g fill="#222">
      <rect x="0" y="0" width="17" height="17"/><rect x="50" y="0" width="17" height="17"/><rect x="0" y="50" width="17" height="17"/>
      <rect x="20" y="2" width="4" height="6"/><rect x="27" y="0" width="6" height="4"/><rect x="36" y="4" width="8" height="4"/><rect x="24" y="10" width="4" height="8"/><rect x="32" y="12" width="10" height="4"/>
      <rect x="2" y="20" width="8" height="4"/><rect x="13" y="22" width="6" height="6"/><rect x="22" y="20" width="10" height="4"/><rect x="36" y="20" width="6" height="8"/><rect x="46" y="22" width="10" height="4"/><rect x="58" y="20" width="8" height="6"/>
      <rect x="4" y="30" width="6" height="8"/><rect x="16" y="32" width="8" height="4"/><rect x="28" y="28" width="8" height="10"/><rect x="40" y="32" width="4" height="6"/><rect x="48" y="30" width="6" height="4"/><rect x="60" y="32" width="6" height="8"/>
      <rect x="2" y="42" width="10" height="4"/><rect x="18" y="40" width="6" height="6"/><rect x="26" y="44" width="10" height="4"/><rect x="40" y="42" width="8" height="4"/><rect x="52" y="40" width="4" height="8"/>
      <rect x="22" y="52" width="6" height="8"/><rect x="32" y="50" width="8" height="4"/><rect x="44" y="52" width="10" height="6"/><rect x="58" y="50" width="8" height="4"/><rect x="30" y="58" width="6" height="8"/><rect x="40" y="60" width="8" height="6"/><rect x="54" y="60" width="12" height="6"/>
    </g>
    <g fill="#fff"><rect x="3" y="3" width="11" height="11"/><rect x="53" y="3" width="11" height="11"/><rect x="3" y="53" width="11" height="11"/></g>
    <g fill="#222"><rect x="6" y="6" width="5" height="5"/><rect x="56" y="6" width="5" height="5"/><rect x="6" y="56" width="5" height="5"/></g>
  </svg>
  <div class="a ser" style="left:697px;top:840px;font-size:12.5px;font-weight:bold;color:#444">北京佳阅会计师事务所（普通合伙）</div>
  <div class="a ser" style="left:770px;top:864px;font-size:12px;font-weight:bold;color:#444">中国•北京</div>
  <div class="a" style="left:1166px;top:188px;width:710px;height:828px;background:#fff;border-right:1px solid #ccc"></div>
  <div class="a" style="left:1166px;top:188px;width:710px;height:34px;background:#7fb5de;color:#fff;font-weight:bold;font-size:12.5px;text-align:center;line-height:34px;letter-spacing:1px">盘锦辽福石油机械设备有限公司-投标文件</div>
  <div class="a" style="left:1230px;top:230px;width:1px;height:20px;background:#999"></div><div class="a" style="left:1210px;top:250px;width:21px;height:1px;background:#999"></div>
  <div class="a" style="left:1792px;top:230px;width:1px;height:20px;background:#999"></div><div class="a" style="left:1792px;top:250px;width:21px;height:1px;background:#999"></div>
  <div class="a" style="left:1232px;top:243px;width:1px;height:260px;background:#ddd"></div>
  <div class="a" style="left:1324px;top:329px;font-size:15.5px;font-weight:bold;color:#333">北京佳阅会计师事务所(普通合伙)</div>
  <div class="a ser" style="left:1343px;top:370px;font-size:14px;font-weight:bold;color:#333;letter-spacing:0.3px">盘锦辽福石油机械设备有限公司</div>
  <div class="a ser" style="left:1404px;top:410px;font-size:14px;font-weight:bold;color:#333;letter-spacing:7px">审计报告</div>
  <div class="a ser" style="left:1421px;top:448px;font-size:14px;font-weight:bold;color:#333;letter-spacing:14px">目录</div>
  <div class="stamp" style="left:1493px;top:470px;transform:rotate(-16deg) scaleY(1.35)">北京佳阅会计师事务所（普通合伙）</div>
  <div class="a ser" style="left:1360px;top:485px;font-size:12px;color:#555;letter-spacing:1.5px">一、审计报告</div>
  <div class="a ser" style="left:1360px;top:521px;font-size:12px;color:#555;letter-spacing:1.5px">二、审计报告附件</div>
  <div class="a ser" style="left:1360px;top:557px;font-size:12px;color:#555;letter-spacing:1.5px">1、资产负债表</div>
  <div class="a ser" style="left:1360px;top:593px;font-size:12px;color:#555;letter-spacing:1.5px">2、利润表</div>
  <div class="a ser" style="left:1360px;top:629px;font-size:12px;color:#555;letter-spacing:1.5px">3、现金流量表</div>
  <div class="a ser" style="left:1360px;top:665px;font-size:12px;color:#555;letter-spacing:1.5px">4、所有者权益变动表</div>
  <div class="a ser" style="left:1360px;top:701px;font-size:12px;color:#555;letter-spacing:1.5px">5、财务报表附注</div>
  <div class="a ser" style="left:1360px;top:737px;font-size:12px;color:#555;letter-spacing:1.5px">三、会计师事务所营业执照及相关资质</div>
  <div class="status">
    <div class="a" style="left:15px;top:2px">第 121 页，共 172 页</div>
    <div class="a" style="left:133px;top:2px">13102 个字</div>
    <div class="a" style="left:203px;top:2px">⧠</div>
    <div class="a" style="left:231px;top:2px">英语(美国)</div>
    <div class="a" style="left:336px;top:2px">修订: 关闭</div>
    <div class="a" style="left:461px;top:2px">⟲ 辅助功能: 调查</div>
    <div class="a" style="left:1632px;top:2px">🕮</div>
    <div class="a" style="left:1672px;top:-1px;width:28px;height:21px;background:#c8c8c8"></div>
    <div class="a" style="left:1679px;top:2px">☰</div>
    <div class="a" style="left:1719px;top:2px">⊟</div>
    <div class="a" style="left:1747px;top:1px">−</div>
    <div class="a" style="left:1760px;top:10px;width:100px;height:1px;background:#555"></div>
    <div class="a" style="left:1803px;top:4px;width:5px;height:12px;background:#555"></div>
    <div class="a" style="left:1864px;top:1px">+</div>
    <div class="a" style="left:1886px;top:2px">90%</div>
  </div>
  <div class="task"><div class="a" style="left:419px;top:0;width:50px;height:7px;background:#a0522d"></div><div class="a" style="left:878px;top:0;width:48px;height:7px;background:#3a4654"></div></div>
</div>
</body></html>
